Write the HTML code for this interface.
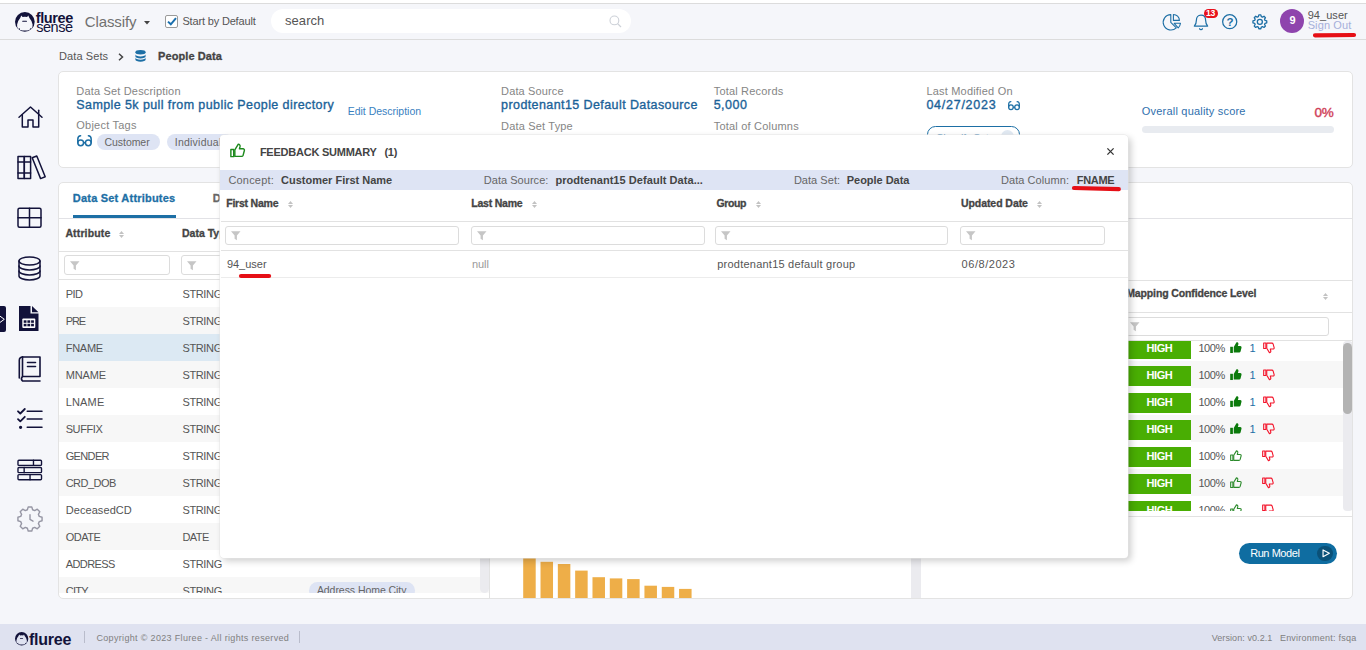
<!DOCTYPE html>
<html lang="en"><head><meta charset="utf-8"><title>Fluree Sense - Classify</title>
<style>
*{box-sizing:border-box;margin:0;padding:0}
html,body{width:1366px;height:650px;overflow:hidden}
body{background:#f5f6fa;font-family:"Liberation Sans",sans-serif;font-size:11px;color:#555;position:relative}
.t{position:absolute;white-space:nowrap;line-height:normal}
.abs{position:absolute}
.grp{position:absolute;left:0;top:0;width:0;height:0}
svg{position:absolute;overflow:visible}
.line{position:absolute;background:#e2e2e6}
.card{position:absolute;background:#fff;border:1px solid #e3e3e3;border-radius:5px}
.pill{position:absolute;background:#dee4f4;border-radius:9px}
.inp{position:absolute;background:#fff;border:1px solid #dcdcdc;border-radius:3px}
.row{position:absolute;left:0;right:0;height:27px}
.alt{background:#f7f7f7}
.sel{background:#dce9f3}
.high{position:absolute;background:#49ae03}
.red{position:absolute;background:#e0161e;border-radius:2px;height:3px}
</style></head>
<body>
<header class="grp">
<div class="abs" style="left:0;top:0;width:1366px;height:3px;background:#fff"></div>
<div class="line" style="left:0;top:3px;width:1366px;height:1px;background:#dcdcdc"></div>
<div class="abs" style="left:0;top:4px;width:1366px;height:36px;border-bottom:1px solid #dcdcdc;background:#f5f6fa"></div>
<svg style="left:14.9px;top:12.4px" width="19.700" height="19.700" viewBox="0 0 19.700 19.700"><circle cx="9.850" cy="9.850" r="9.850" fill="#12123a"/><path d="M6.300 3.600L7.600 5.100Q10 4.500 12.100 5.100L13.300 3.600L14.400 5.900Q16.900 8.600 17.600 12.400Q18 15.200 16.200 17L15.200 15.900L14.600 17.900Q10 19.100 5.100 17.900L4.600 15.900L3.500 17Q1.600 15.200 2.100 12.400Q2.800 8.600 5.200 5.900z" fill="#f5f6fa"/><rect x="7.200" y="8.700" width="4.800" height="1.050" rx=".5" fill="#12123a"/></svg>
<span class="t" style="left:35.70px;top:10.00px;font-size:14.5px;color:#12123a;font-weight:700;letter-spacing:-0.381px;">fluree</span>
<span class="t" style="left:36.20px;top:19.00px;font-size:14.5px;color:#12123a;letter-spacing:-0.439px;">sense</span>
<span class="t" style="left:84.70px;top:13.00px;font-size:15px;color:#707070;letter-spacing:-0.101px;">Classify</span>
<svg style="left:144px;top:20.5px" width="6" height="4" viewBox="0 0 6 4"><path d="M0 0h6L3 3.6z" fill="#444"/></svg>
<div class="abs" style="left:165px;top:15px;width:13px;height:13px;border:1px solid #9a9a9a;border-radius:2px;background:#fff"></div>
<svg style="left:166.5px;top:17px" width="10" height="9" viewBox="0 0 10 9"><path d="M1 4.6L3.8 7.3L9 1.2" fill="none" stroke="#1a6fae" stroke-width="2"/></svg>
<span class="t" style="left:182.40px;top:15.00px;font-size:11px;color:#555;letter-spacing:-0.163px;">Start by Default</span>
<div class="abs" style="left:271px;top:9px;width:360px;height:24px;border-radius:12px;background:#fff"></div>
<span class="t" style="left:285.00px;top:13.00px;font-size:13px;color:#555;letter-spacing:0.063px;">search</span>
<svg style="left:608.600px;top:14.600px" width="13" height="13" viewBox="0 0 13 13"><circle cx="5.400" cy="5.400" r="4.400" fill="none" stroke="#cdd1d8" stroke-width="1.100"/><path d="M8.600 8.600L12 12" stroke="#cdd1d8" stroke-width="1.200"/></svg>
<svg style="left:1163px;top:14px" width="18" height="17" viewBox="0 0 18 17"><g fill="none" stroke="#1d6fa5" stroke-width="1.100" stroke-linejoin="round"><path d="M7.800 8.300V.6A7.700 7.700 0 1 0 13.300 13.800z"/><path d="M10.400 6.400V.5A6 6 0 0 1 16.400 6.400z"/><path d="M11.200 9.300h6.300a7.600 7.600 0 0 1-2.300 4.500z"/></g></svg>
<svg style="left:1193.300px;top:13.900px" width="16" height="17" viewBox="0 0 17 18"><g fill="none" stroke="#1d6fa5" stroke-width="1.3" stroke-linecap="round" stroke-linejoin="round"><path d="M8.5 1.2C5.3 1.2 3.6 3.6 3.6 6.6c0 3.4-1 4.9-2.2 6.2h14.2c-1.2-1.3-2.2-2.800-2.200-6.200C13.400 3.600 11.700 1.200 8.500 1.200z"/><path d="M7 15.6a1.6 1.6 0 0 0 3 0"/></g></svg>
<div class="abs" style="left:1204.200px;top:9px;width:13.600px;height:8.800px;border-radius:4.400px;background:#e8111b"></div>
<span class="t" style="left:1206.00px;top:8.00px;font-size:8.6px;color:#fff;font-weight:700;letter-spacing:-0.280px;">13</span>
<svg style="left:1222.200px;top:14.200px" width="15.400" height="15.400" viewBox="0 0 15.400 15.400"><circle cx="7.700" cy="7.700" r="7.050" fill="none" stroke="#1d6fa5" stroke-width="1.250"/></svg>
<span class="t" style="left:1226.40px;top:16.00px;font-size:11.5px;color:#1d6fa5;font-weight:700;">?</span>
<svg style="left:1251.800px;top:14.100px" width="15.700" height="15.700" viewBox="0 0 18 18"><g fill="none" stroke="#1d6fa5" stroke-width="1.500" stroke-linejoin="round"><circle cx="9" cy="9" r="2.900"/><path d="M7.32 3.03 L7.83 1.09 L10.17 1.09 L10.68 3.03 L12.03 3.59 L13.77 2.57 L15.43 4.23 L14.41 5.97 L14.97 7.32 L16.91 7.83 L16.91 10.17 L14.97 10.68 L14.41 12.03 L15.43 13.77 L13.77 15.43 L12.03 14.41 L10.68 14.97 L10.17 16.91 L7.83 16.91 L7.32 14.97 L5.97 14.41 L4.23 15.43 L2.57 13.77 L3.59 12.03 L3.03 10.68 L1.09 10.17 L1.09 7.83 L3.03 7.32 L3.59 5.97 L2.57 4.23 L4.23 2.57 L5.97 3.59z"/></g></svg>
<div class="abs" style="left:1279.900px;top:8.800px;width:24px;height:24px;border-radius:12px;background:#8e44ad"></div>
<span class="t" style="left:1289.60px;top:14.00px;font-size:11px;color:#fff;font-weight:700;">9</span>
<span class="t" style="left:1307.70px;top:9.00px;font-size:11px;color:#555;letter-spacing:0.050px;">94_user</span>
<span class="t" style="left:1307.70px;top:19.00px;font-size:11px;color:#a6b0da;letter-spacing:0.100px;">Sign Out</span>
<svg style="left:1310.6px;top:30.7px" width="47" height="8" viewBox="1310.6 30.7 47 8"><path d="M1314.6 35L1353.6 34.7" stroke="#e60f16" stroke-width="4.2" stroke-linecap="round" fill="none"/></svg>
</header>
<nav class="grp" aria-label="Main">
<svg style="left:18px;top:105.5px" width="25" height="22" viewBox="0 0 25 22"><g fill="none" stroke="#12123a" stroke-width="1.5" stroke-linejoin="round" stroke-linecap="round"><path d="M1 11.200L12.500 1L24 11.200"/><path d="M4.300 8.800V21h5.700v-7h5v7h5.700V8.800"/><path d="M20.700 8V4.300"/></g></svg>
<svg style="left:16.5px;top:155px" width="29" height="25" viewBox="0 0 29 25"><g fill="none" stroke="#12123a" stroke-width="1.5" stroke-linejoin="round" stroke-linecap="round"><rect x="1" y="1.500" width="6.300" height="22"/><rect x="7.300" y="1.500" width="6.300" height="22"/><path d="M1 7h12.600M1 18h12.600"/><path d="M15.200 2.800l4.600-1.800 8.400 20.800-4.600 1.800z"/></g></svg>
<svg style="left:17.2px;top:207.2px" width="25" height="21.5" viewBox="0 0 25 21"><g fill="none" stroke="#12123a" stroke-width="1.5" stroke-linejoin="round" stroke-linecap="round"><rect x="1" y="1" width="23" height="19" rx="1.500"/><path d="M12.500 1v19M1 10.500h23"/></g></svg>
<svg style="left:18px;top:255.5px" width="23" height="25" viewBox="0 0 23 25"><g fill="none" stroke="#12123a" stroke-width="1.5" stroke-linejoin="round" stroke-linecap="round"><ellipse cx="11.500" cy="5" rx="10.500" ry="4"/><path d="M1 5v15c0 2.200 4.700 4 10.500 4s10.500-1.800 10.500-4V5"/><path d="M1 10c0 2.200 4.700 4 10.500 4s10.500-1.800 10.500-4"/><path d="M1 15c0 2.200 4.700 4 10.500 4s10.500-1.800 10.500-4"/></g></svg>
<div class="abs" style="left:0;top:305.500px;width:5.500px;height:26px;background:#12123a;border-radius:0 2px 2px 0"></div>
<svg style="left:0;top:315px" width="5.500" height="9" viewBox="0 0 5.500 9" overflow="hidden"><path d="M-.5 .8L4.300 4.300L-.5 7.800" fill="none" stroke="#fff" stroke-width="1"/></svg>
<svg style="left:19px;top:306px" width="20" height="25" viewBox="0 0 20 25"><path d="M0 0h11.500v7.500H19.500V25H0z" fill="#12123a"/><path d="M13 0L19.500 6.200H13z" fill="#12123a"/><rect x="3.300" y="12.400" width="13" height="9.600" rx="1" fill="#fff"/><g fill="#12123a"><rect x="4.700" y="14.300" width="2.800" height="2.500"/><rect x="8.400" y="14.300" width="2.800" height="2.500"/><rect x="12.100" y="14.300" width="2.800" height="2.500"/><rect x="4.700" y="17.800" width="2.800" height="2.500"/><rect x="8.400" y="17.800" width="2.800" height="2.500"/><rect x="12.100" y="17.800" width="2.800" height="2.500"/></g></svg>
<svg style="left:18.2px;top:355.8px" width="23" height="26" viewBox="0 0 23 26"><g fill="none" stroke="#12123a" stroke-width="1.6" stroke-linejoin="round" stroke-linecap="round"><path d="M4.500 1H22v19.500H4.500A3.200 3.200 0 0 0 4.500 25H22"/><path d="M1.300 22V4.200A3.200 3.200 0 0 1 4.500 1"/><path d="M4.500 1v19.500"/><path d="M9.500 6.500h8M9.500 10.500h8"/></g></svg>
<svg style="left:16px;top:408.3px" width="27" height="21" viewBox="0 0 27 21"><g fill="none" stroke="#12123a" stroke-width="1.5" stroke-linejoin="round" stroke-linecap="round"><path d="M2 3.300l2.300 2.200L8.800 1" stroke-width="1.800"/><path d="M2 11.100l2.300 2.200L8.800 8.800" stroke-width="1.800"/><path d="M11.200 3.300h14.800M11.200 11.100h14.800M11.200 19.300h14.800"/><circle cx="4.600" cy="19.300" r=".9" fill="#12123a"/></g></svg>
<svg style="left:17.2px;top:458.8px" width="25.5" height="22" viewBox="0 0 26 22"><g fill="none" stroke="#12123a" stroke-width="1.4" stroke-linejoin="round" stroke-linecap="round"><rect x="1" y="1" width="24" height="5.300" rx="1"/><rect x="1" y="8.400" width="24" height="5.300" rx="1"/><rect x="1" y="15.700" width="24" height="5.300" rx="1"/><path d="M16.800 1v5.300M7.300 8.400v5.300M13.300 15.700V21"/></g></svg>
<svg style="left:17px;top:506px" width="26" height="26" viewBox="0 0 26 26"><g fill="none" stroke="#9696a4" stroke-width="1.400" stroke-linejoin="round" stroke-linecap="round"><path d="M10.39 3.76 L11.21 0.93 L14.79 0.93 L15.61 3.76 L17.69 4.62 L20.27 3.20 L22.80 5.73 L21.38 8.31 L22.24 10.39 L25.07 11.21 L25.07 14.79 L22.24 15.61 L21.38 17.69 L22.80 20.27 L20.27 22.80 L17.69 21.38 L15.61 22.24 L14.79 25.07 L11.21 25.07 L10.39 22.24 L8.31 21.38 L5.73 22.80 L3.20 20.27 L4.62 17.69 L3.76 15.61 L0.93 14.79 L0.93 11.21 L3.76 10.39 L4.62 8.31 L3.20 5.73 L5.73 3.20 L8.31 4.62z"/><path d="M13 8.800v4.600l3 1.800"/></g></svg>
</nav>
<main class="grp">
<div class="grp" aria-label="Breadcrumb">
<span class="t" style="left:59.10px;top:50.00px;font-size:11px;color:#555;letter-spacing:0.078px;">Data Sets</span>
<svg style="left:118px;top:53px" width="6" height="8" viewBox="0 0 6 8"><path d="M1 .8L4.500 4L1 7.200" fill="none" stroke="#444" stroke-width="1.500"/></svg>
<svg style="left:135px;top:49.700px" width="11" height="11.700" viewBox="0 0 12 12" preserveAspectRatio="none"><g fill="#1d6fa5"><ellipse cx="6" cy="2.300" rx="5.600" ry="2.300"/><path d="M.4 4.300c0 1.300 2.500 2.300 5.600 2.300s5.600-1 5.600-2.300v2.200c0 1.300-2.500 2.300-5.600 2.300S.4 7.800.4 6.500z"/><path d="M.4 7.800c0 1.300 2.500 2.300 5.600 2.300s5.600-1 5.600-2.300v1.900c0 1.300-2.500 2.300-5.600 2.300S.4 11 .4 9.700z"/></g></svg>
<span class="t" style="left:158.10px;top:50.00px;font-size:11px;color:#444;font-weight:700;letter-spacing:0.085px;-webkit-text-stroke:.3px #444;">People Data</span>
</div>
<section class="grp" aria-label="Data set summary">
<div class="card" style="left:58px;top:71px;width:1295px;height:97px"></div>
<span class="t" style="left:76.30px;top:85.00px;font-size:11px;color:#858585;letter-spacing:0.176px;">Data Set Description</span>
<span class="t" style="left:76.30px;top:98.00px;font-size:12.5px;color:#1b6298;letter-spacing:0.407px;-webkit-text-stroke:.35px #1b6298;">Sample 5k pull from public People directory</span>
<span class="t" style="left:347.70px;top:105.00px;font-size:10.5px;color:#3a7fbf;letter-spacing:-0.008px;">Edit Description</span>
<span class="t" style="left:76.30px;top:119.00px;font-size:11px;color:#858585;letter-spacing:0.229px;">Object Tags</span>
<svg style="left:76.9px;top:135.2px" width="15" height="11.5" viewBox="0 0 15 11.500"><g fill="none" stroke="#1d6fa5" stroke-width="1.500" stroke-linecap="round"><circle cx="3.700" cy="7.800" r="2.900"/><circle cx="11.300" cy="7.800" r="2.900"/><path d="M6.600 7.800h1.800"/><path d="M.8 7.800V4.200C.8 2 2 .9 3.600 .8"/><path d="M14.200 7.800V4.200C14.200 2 13 .9 11.400 .8"/></g></svg>
<div class="pill" style="left:97px;top:134px;width:62.600px;height:16px"></div>
<span class="t" style="left:104.50px;top:136.00px;font-size:10.5px;color:#666;letter-spacing:-0.051px;">Customer</span>
<div class="pill" style="left:167px;top:134px;width:66px;height:16px"></div>
<span class="t" style="left:174.80px;top:136.00px;font-size:10.5px;color:#666;letter-spacing:0.224px;">Individual</span>
<span class="t" style="left:501.10px;top:85.00px;font-size:11px;color:#858585;letter-spacing:0.132px;">Data Source</span>
<span class="t" style="left:501.10px;top:98.00px;font-size:12.5px;color:#1b6298;letter-spacing:0.408px;-webkit-text-stroke:.35px #1b6298;">prodtenant15 Default Datasource</span>
<span class="t" style="left:501.10px;top:120.00px;font-size:11px;color:#858585;letter-spacing:0.176px;">Data Set Type</span>
<span class="t" style="left:713.70px;top:85.00px;font-size:11px;color:#858585;letter-spacing:0.188px;">Total Records</span>
<span class="t" style="left:713.70px;top:98.00px;font-size:12.5px;color:#1b6298;letter-spacing:0.484px;-webkit-text-stroke:.35px #1b6298;">5,000</span>
<span class="t" style="left:713.70px;top:120.00px;font-size:11px;color:#858585;letter-spacing:0.205px;">Total of Columns</span>
<span class="t" style="left:926.40px;top:85.00px;font-size:11px;color:#858585;letter-spacing:0.197px;">Last Modified On</span>
<span class="t" style="left:926.40px;top:98.00px;font-size:12.5px;color:#1b6298;letter-spacing:0.744px;-webkit-text-stroke:.35px #1b6298;">04/27/2023</span>
<svg style="left:1008px;top:100.5px" width="12" height="9.2" viewBox="0 0 15 11.500"><g fill="none" stroke="#1d6fa5" stroke-width="1.500" stroke-linecap="round"><circle cx="3.700" cy="7.800" r="2.900"/><circle cx="11.300" cy="7.800" r="2.900"/><path d="M6.600 7.800h1.800"/><path d="M.8 7.800V4.200C.8 2 2 .9 3.600 .8"/><path d="M14.200 7.800V4.200C14.200 2 13 .9 11.400 .8"/></g></svg>
<div class="abs" style="left:927px;top:125.700px;width:93px;height:21px;border:1.200px solid #1d6fa5;border-radius:8.500px;background:#fff"></div>
<span class="t" style="left:935.70px;top:132.00px;font-size:11px;color:#1d6fa5;letter-spacing:-0.448px;">Classify Set</span>
<div class="abs" style="left:1000.500px;top:130px;width:13.700px;height:13.700px;border-radius:7px;background:#e1e9f2"></div>
<span class="t" style="left:1003.90px;top:134.00px;font-size:10px;color:#1d6fa5;font-weight:700;">»</span>
<span class="t" style="left:1141.80px;top:105.00px;font-size:11px;color:#2f6fad;letter-spacing:0.202px;">Overall quality score</span>
<span class="t" style="left:1314.40px;top:105.00px;font-size:13.5px;color:#cf3d57;letter-spacing:-0.156px;-webkit-text-stroke:.4px #cf3d57;">0%</span>
<div class="abs" style="left:1142px;top:126px;width:192px;height:6.500px;border-radius:3.500px;background:#e8ebf0"></div>
</section>
<section class="grp" aria-label="Data set attributes">
<div class="card" style="left:58px;top:182px;width:1295px;height:417px"></div>
<span class="t" style="left:72.80px;top:192.00px;font-size:11px;color:#1d6fa5;font-weight:700;letter-spacing:0.210px;-webkit-text-stroke:.3px #1d6fa5;">Data Set Attributes</span>
<div class="abs" style="left:73px;top:215px;width:103px;height:3px;background:#1d6fa5"></div>
<span class="t" style="left:212.70px;top:192.00px;font-size:11px;color:#666;font-weight:700;-webkit-text-stroke:.3px #666;">Data Relationships</span>
<div class="line" style="left:59px;top:218px;width:1293px;height:1px"></div>
<div class="abs" style="left:59px;top:219px;width:430px;height:374px;overflow:hidden"><div class="abs" style="left:1px;top:0;width:429.500px;height:374px">
<div class="line" style="left:-1px;top:32px;width:431px;height:1px;background:#e2e2e2"></div>
<div class="line" style="left:-1px;top:60px;width:431px;height:1px;background:#e2e2e2"></div>
<div class="inp" style="left:4.300px;top:36px;width:105.500px;height:19.500px"></div><svg style="left:10.3px;top:41.9px" width="9.500" height="9.500" viewBox="0 0 9 9"><path d="M0 0.200h9L5.600 4.300v4.400L3.400 7.300V4.300z" fill="#c6c6c6"/></svg>
<div class="inp" style="left:121.300px;top:36px;width:105.500px;height:19.500px"></div><svg style="left:127.3px;top:41.9px" width="9.500" height="9.500" viewBox="0 0 9 9"><path d="M0 0.200h9L5.600 4.300v4.400L3.400 7.300V4.300z" fill="#c6c6c6"/></svg>
<div class="inp" style="left:245px;top:36px;width:170px;height:19.500px"></div><svg style="left:250.8px;top:41.9px" width="9.500" height="9.500" viewBox="0 0 9 9"><path d="M0 0.200h9L5.600 4.300v4.400L3.400 7.300V4.300z" fill="#c6c6c6"/></svg>
<div class="row" style="left:-1px;top:61.4px"></div>
<span class="t" style="left:5.70px;top:69.00px;font-size:11px;color:#555;letter-spacing:-0.546px;">PID</span>
<span class="t" style="left:122.40px;top:69.00px;font-size:11px;color:#555;letter-spacing:-0.343px;">STRING</span>
<div class="row alt" style="left:-1px;top:88.4px"></div>
<span class="t" style="left:5.70px;top:96.00px;font-size:11px;color:#555;letter-spacing:-1.139px;">PRE</span>
<span class="t" style="left:122.40px;top:96.00px;font-size:11px;color:#555;letter-spacing:-0.343px;">STRING</span>
<div class="row sel" style="left:-1px;top:115.4px"></div>
<span class="t" style="left:5.70px;top:123.00px;font-size:11px;color:#555;letter-spacing:-0.260px;">FNAME</span>
<span class="t" style="left:122.40px;top:123.00px;font-size:11px;color:#555;letter-spacing:-0.343px;">STRING</span>
<div class="row alt" style="left:-1px;top:142.4px"></div>
<span class="t" style="left:5.70px;top:150.00px;font-size:11px;color:#555;letter-spacing:-0.149px;">MNAME</span>
<span class="t" style="left:122.40px;top:150.00px;font-size:11px;color:#555;letter-spacing:-0.343px;">STRING</span>
<div class="row" style="left:-1px;top:169.4px"></div>
<span class="t" style="left:5.70px;top:177.00px;font-size:11px;color:#555;letter-spacing:0.160px;">LNAME</span>
<span class="t" style="left:122.40px;top:177.00px;font-size:11px;color:#555;letter-spacing:-0.343px;">STRING</span>
<div class="row alt" style="left:-1px;top:196.4px"></div>
<span class="t" style="left:5.70px;top:204.00px;font-size:11px;color:#555;letter-spacing:-0.402px;">SUFFIX</span>
<span class="t" style="left:122.40px;top:204.00px;font-size:11px;color:#555;letter-spacing:-0.343px;">STRING</span>
<div class="row" style="left:-1px;top:223.4px"></div>
<span class="t" style="left:5.70px;top:231.00px;font-size:11px;color:#555;letter-spacing:-0.644px;">GENDER</span>
<span class="t" style="left:122.40px;top:231.00px;font-size:11px;color:#555;letter-spacing:-0.343px;">STRING</span>
<div class="row alt" style="left:-1px;top:250.4px"></div>
<span class="t" style="left:5.70px;top:258.00px;font-size:11px;color:#555;letter-spacing:-0.512px;">CRD_DOB</span>
<span class="t" style="left:122.40px;top:258.00px;font-size:11px;color:#555;letter-spacing:-0.343px;">STRING</span>
<div class="row" style="left:-1px;top:277.4px"></div>
<span class="t" style="left:5.70px;top:285.00px;font-size:11px;color:#555;letter-spacing:0.078px;">DeceasedCD</span>
<span class="t" style="left:122.40px;top:285.00px;font-size:11px;color:#555;letter-spacing:-0.343px;">STRING</span>
<div class="row alt" style="left:-1px;top:304.4px"></div>
<span class="t" style="left:5.70px;top:312.00px;font-size:11px;color:#555;letter-spacing:-0.475px;">ODATE</span>
<span class="t" style="left:122.40px;top:312.00px;font-size:11px;color:#555;letter-spacing:-0.505px;">DATE</span>
<div class="row" style="left:-1px;top:331.4px"></div>
<span class="t" style="left:5.70px;top:339.00px;font-size:11px;color:#555;letter-spacing:-0.568px;">ADDRESS</span>
<span class="t" style="left:122.40px;top:339.00px;font-size:11px;color:#555;letter-spacing:-0.343px;">STRING</span>
<div class="row alt" style="left:-1px;top:358.4px"></div>
<span class="t" style="left:5.70px;top:366.00px;font-size:11px;color:#555;letter-spacing:-0.714px;">CITY</span>
<span class="t" style="left:122.40px;top:366.00px;font-size:11px;color:#555;letter-spacing:-0.343px;">STRING</span>
<div class="pill" style="left:248.800px;top:363px;width:106.200px;height:17px"></div>
<span class="t" style="left:256.90px;top:365.00px;font-size:10.5px;color:#666;letter-spacing:-0.056px;">Address Home City</span>
<div class="abs" style="left:420px;top:62px;width:9px;height:312px;border-radius:4.500px;background:#ebebef"></div>
</div></div>
<span class="t" style="left:65.40px;top:227.00px;font-size:10.5px;color:#444;font-weight:700;letter-spacing:0.140px;-webkit-text-stroke:.3px #444;">Attribute</span>
<svg style="left:118.5px;top:231.1px" width="5" height="7" viewBox="0 0 5 7"><path d="M2.500 0L5 2.900H0z" fill="#c2c2c2"/><path d="M2.500 7L5 4.100H0z" fill="#c2c2c2"/></svg>
<span class="t" style="left:182.00px;top:227.00px;font-size:10.5px;color:#444;font-weight:700;-webkit-text-stroke:.3px #444;">Data Type</span>
<div class="line" style="left:489px;top:219px;width:1px;height:379px;background:#e2e2e2"></div>
<div class="abs" style="left:911.300px;top:219px;width:9.700px;height:379px;background:#ebebef"></div>
<svg style="left:490px;top:540px" width="421" height="58" viewBox="490 540 421 58"><rect x="523.2" y="548" width="12.500" height="50" fill="#eeae48"/><rect x="540.52" y="561.8" width="12.500" height="36.2" fill="#eeae48"/><rect x="557.84" y="564" width="12.500" height="34" fill="#eeae48"/><rect x="575.16" y="570.6" width="12.500" height="27.4" fill="#eeae48"/><rect x="592.48" y="577.2" width="12.500" height="20.8" fill="#eeae48"/><rect x="609.8" y="578.4" width="12.500" height="19.6" fill="#eeae48"/><rect x="627.12" y="579.1" width="12.500" height="18.9" fill="#eeae48"/><rect x="644.44" y="585.7" width="12.500" height="12.3" fill="#eeae48"/><rect x="661.76" y="586.9" width="12.500" height="11.1" fill="#eeae48"/><rect x="679.08" y="588.9" width="12.500" height="9.1" fill="#eeae48"/></svg>
</section>
<section class="grp" aria-label="Mapping confidence">
<div class="line" style="left:921px;top:280px;width:430.500px;height:1px;background:#e2e2e2"></div>
<span class="t" style="left:1126.20px;top:287.00px;font-size:10.5px;color:#444;font-weight:700;letter-spacing:-0.126px;-webkit-text-stroke:.3px #444;">Mapping Confidence Level</span>
<svg style="left:1323.4px;top:292.6px" width="5" height="7" viewBox="0 0 5 7"><path d="M2.500 0L5 2.900H0z" fill="#c2c2c2"/><path d="M2.500 7L5 4.100H0z" fill="#c2c2c2"/></svg>
<div class="line" style="left:921px;top:312px;width:430.500px;height:1px;background:#e2e2e2"></div>
<div class="inp" style="left:1100px;top:317px;width:228.500px;height:19px"></div><svg style="left:1130.1px;top:321.7px" width="9.500" height="9.500" viewBox="0 0 9 9"><path d="M0 0.200h9L5.600 4.300v4.400L3.400 7.300V4.300z" fill="#c6c6c6"/></svg>
<div class="line" style="left:921px;top:340px;width:430.500px;height:1px;background:#e2e2e2"></div>
<div class="abs" style="left:921px;top:341px;width:430.500px;height:169.500px;overflow:hidden">
<div class="row" style="top:-6.6px"></div>
<div class="high" style="left:120px;top:-2.2px;width:150.200px;height:20px;box-shadow:0 2.500px 0 #fff"></div>
<span class="t" style="left:225.40px;top:1.00px;font-size:11px;color:#fff;font-weight:700;letter-spacing:-0.375px;">HIGH</span>
<span class="t" style="left:277.40px;top:1.00px;font-size:11px;color:#555;letter-spacing:-0.408px;">100%</span>
<svg style="left:309px;top:1.2px" width="12" height="11.5" viewBox="0 0 12.500 12"><g fill="#0b7a0b"><rect x="0.2" y="5" width="2.800" height="6.500"/><path d="M3.900 11V5.300L6.600 .6c.2-.4.700-.5 1.100-.3.900.4 1.300 1.300 1 2.200L8.200 4.300h2.500c.900 0 1.500.8 1.300 1.600l-1 4c-.2.700-.8 1.100-1.500 1.100z"/></g></svg>
<span class="t" style="left:328.40px;top:1.00px;font-size:11px;color:#1d6fa5;">1</span>
<svg style="left:342.3px;top:1px" width="12" height="11.5" viewBox="0 0 12.500 12"><g transform="translate(0 12) scale(1 -1)" fill="none" stroke="#f3152b" stroke-width="1.150" stroke-linejoin="round"><rect x="0.700" y="5.200" width="2.300" height="5.800"/><path d="M3.900 10.800V5.500L6.700 .9c.9.100 1.600.9 1.400 1.900L7.600 4.700h2.900c.800 0 1.300.7 1.100 1.400l-1 3.700c-.2.600-.7 1-1.300 1z"/></g></svg>
<div class="row alt" style="top:20.4px"></div>
<div class="high" style="left:120px;top:24.8px;width:150.200px;height:20px;box-shadow:0 2.500px 0 #fff"></div>
<span class="t" style="left:225.40px;top:28.00px;font-size:11px;color:#fff;font-weight:700;letter-spacing:-0.375px;">HIGH</span>
<span class="t" style="left:277.40px;top:28.00px;font-size:11px;color:#555;letter-spacing:-0.408px;">100%</span>
<svg style="left:309px;top:28.2px" width="12" height="11.5" viewBox="0 0 12.500 12"><g fill="#0b7a0b"><rect x="0.2" y="5" width="2.800" height="6.500"/><path d="M3.900 11V5.300L6.600 .6c.2-.4.700-.5 1.100-.3.900.4 1.300 1.300 1 2.200L8.200 4.300h2.500c.900 0 1.500.8 1.300 1.600l-1 4c-.2.700-.8 1.100-1.500 1.100z"/></g></svg>
<span class="t" style="left:328.40px;top:28.00px;font-size:11px;color:#1d6fa5;">1</span>
<svg style="left:342.3px;top:28px" width="12" height="11.5" viewBox="0 0 12.500 12"><g transform="translate(0 12) scale(1 -1)" fill="none" stroke="#f3152b" stroke-width="1.150" stroke-linejoin="round"><rect x="0.700" y="5.200" width="2.300" height="5.800"/><path d="M3.900 10.800V5.500L6.700 .9c.9.100 1.600.9 1.400 1.900L7.600 4.700h2.900c.800 0 1.300.7 1.100 1.400l-1 3.700c-.2.600-.7 1-1.300 1z"/></g></svg>
<div class="row" style="top:47.4px"></div>
<div class="high" style="left:120px;top:51.8px;width:150.200px;height:20px;box-shadow:0 2.500px 0 #fff"></div>
<span class="t" style="left:225.40px;top:55.00px;font-size:11px;color:#fff;font-weight:700;letter-spacing:-0.375px;">HIGH</span>
<span class="t" style="left:277.40px;top:55.00px;font-size:11px;color:#555;letter-spacing:-0.408px;">100%</span>
<svg style="left:309px;top:55.2px" width="12" height="11.5" viewBox="0 0 12.500 12"><g fill="#0b7a0b"><rect x="0.2" y="5" width="2.800" height="6.500"/><path d="M3.900 11V5.300L6.600 .6c.2-.4.700-.5 1.100-.3.900.4 1.300 1.300 1 2.200L8.200 4.300h2.500c.900 0 1.500.8 1.300 1.600l-1 4c-.2.700-.8 1.100-1.500 1.100z"/></g></svg>
<span class="t" style="left:328.40px;top:55.00px;font-size:11px;color:#1d6fa5;">1</span>
<svg style="left:342.3px;top:55px" width="12" height="11.5" viewBox="0 0 12.500 12"><g transform="translate(0 12) scale(1 -1)" fill="none" stroke="#f3152b" stroke-width="1.150" stroke-linejoin="round"><rect x="0.700" y="5.200" width="2.300" height="5.800"/><path d="M3.900 10.800V5.500L6.700 .9c.9.100 1.600.9 1.400 1.900L7.600 4.700h2.900c.800 0 1.300.7 1.100 1.400l-1 3.700c-.2.600-.7 1-1.300 1z"/></g></svg>
<div class="row alt" style="top:74.4px"></div>
<div class="high" style="left:120px;top:78.8px;width:150.200px;height:20px;box-shadow:0 2.500px 0 #fff"></div>
<span class="t" style="left:225.40px;top:82.00px;font-size:11px;color:#fff;font-weight:700;letter-spacing:-0.375px;">HIGH</span>
<span class="t" style="left:277.40px;top:82.00px;font-size:11px;color:#555;letter-spacing:-0.408px;">100%</span>
<svg style="left:309px;top:82.2px" width="12" height="11.5" viewBox="0 0 12.500 12"><g fill="#0b7a0b"><rect x="0.2" y="5" width="2.800" height="6.500"/><path d="M3.900 11V5.300L6.600 .6c.2-.4.700-.5 1.100-.3.900.4 1.300 1.300 1 2.200L8.200 4.300h2.500c.900 0 1.500.8 1.300 1.600l-1 4c-.2.700-.8 1.100-1.500 1.100z"/></g></svg>
<span class="t" style="left:328.40px;top:82.00px;font-size:11px;color:#1d6fa5;">1</span>
<svg style="left:342.3px;top:82px" width="12" height="11.5" viewBox="0 0 12.500 12"><g transform="translate(0 12) scale(1 -1)" fill="none" stroke="#f3152b" stroke-width="1.150" stroke-linejoin="round"><rect x="0.700" y="5.200" width="2.300" height="5.800"/><path d="M3.900 10.800V5.500L6.700 .9c.9.100 1.600.9 1.400 1.900L7.600 4.700h2.900c.800 0 1.300.7 1.100 1.400l-1 3.700c-.2.600-.7 1-1.300 1z"/></g></svg>
<div class="row" style="top:101.4px"></div>
<div class="high" style="left:120px;top:105.8px;width:150.200px;height:20px;box-shadow:0 2.500px 0 #fff"></div>
<span class="t" style="left:225.40px;top:109.00px;font-size:11px;color:#fff;font-weight:700;letter-spacing:-0.375px;">HIGH</span>
<span class="t" style="left:277.40px;top:109.00px;font-size:11px;color:#555;letter-spacing:-0.408px;">100%</span>
<svg style="left:309px;top:109.2px" width="12" height="11.5" viewBox="0 0 12.500 12"><g fill="none" stroke="#2b8a2b" stroke-width="1.150" stroke-linejoin="round"><rect x="0.700" y="5.200" width="2.300" height="5.800"/><path d="M3.900 10.800V5.500L6.700 .9c.9.100 1.600.9 1.400 1.900L7.600 4.700h2.900c.800 0 1.300.7 1.100 1.400l-1 3.700c-.2.600-.7 1-1.300 1z"/></g></svg>
<svg style="left:340.5px;top:109px" width="12" height="11.5" viewBox="0 0 12.500 12"><g transform="translate(0 12) scale(1 -1)" fill="none" stroke="#f3152b" stroke-width="1.150" stroke-linejoin="round"><rect x="0.700" y="5.200" width="2.300" height="5.800"/><path d="M3.900 10.800V5.500L6.700 .9c.9.100 1.600.9 1.400 1.900L7.600 4.700h2.900c.800 0 1.300.7 1.100 1.400l-1 3.700c-.2.600-.7 1-1.300 1z"/></g></svg>
<div class="row alt" style="top:128.4px"></div>
<div class="high" style="left:120px;top:132.8px;width:150.200px;height:20px;box-shadow:0 2.500px 0 #fff"></div>
<span class="t" style="left:225.40px;top:136.00px;font-size:11px;color:#fff;font-weight:700;letter-spacing:-0.375px;">HIGH</span>
<span class="t" style="left:277.40px;top:136.00px;font-size:11px;color:#555;letter-spacing:-0.408px;">100%</span>
<svg style="left:309px;top:136.2px" width="12" height="11.5" viewBox="0 0 12.500 12"><g fill="none" stroke="#2b8a2b" stroke-width="1.150" stroke-linejoin="round"><rect x="0.700" y="5.200" width="2.300" height="5.800"/><path d="M3.900 10.800V5.500L6.700 .9c.9.100 1.600.9 1.400 1.900L7.600 4.700h2.900c.800 0 1.300.7 1.100 1.400l-1 3.700c-.2.600-.7 1-1.300 1z"/></g></svg>
<svg style="left:340.5px;top:136px" width="12" height="11.5" viewBox="0 0 12.500 12"><g transform="translate(0 12) scale(1 -1)" fill="none" stroke="#f3152b" stroke-width="1.150" stroke-linejoin="round"><rect x="0.700" y="5.200" width="2.300" height="5.800"/><path d="M3.900 10.800V5.500L6.700 .9c.9.100 1.600.9 1.400 1.900L7.600 4.700h2.900c.800 0 1.300.7 1.100 1.400l-1 3.700c-.2.600-.7 1-1.300 1z"/></g></svg>
<div class="row" style="top:155.4px"></div>
<div class="high" style="left:120px;top:159.8px;width:150.200px;height:20px;box-shadow:0 2.500px 0 #fff"></div>
<span class="t" style="left:225.40px;top:163.00px;font-size:11px;color:#fff;font-weight:700;letter-spacing:-0.375px;">HIGH</span>
<span class="t" style="left:277.40px;top:163.00px;font-size:11px;color:#555;letter-spacing:-0.408px;">100%</span>
<svg style="left:309px;top:163.2px" width="12" height="11.5" viewBox="0 0 12.500 12"><g fill="none" stroke="#2b8a2b" stroke-width="1.150" stroke-linejoin="round"><rect x="0.700" y="5.200" width="2.300" height="5.800"/><path d="M3.900 10.800V5.500L6.700 .9c.9.100 1.600.9 1.400 1.900L7.600 4.700h2.900c.800 0 1.300.7 1.100 1.400l-1 3.700c-.2.600-.7 1-1.300 1z"/></g></svg>
<svg style="left:340.5px;top:163px" width="12" height="11.5" viewBox="0 0 12.500 12"><g transform="translate(0 12) scale(1 -1)" fill="none" stroke="#f3152b" stroke-width="1.150" stroke-linejoin="round"><rect x="0.700" y="5.200" width="2.300" height="5.800"/><path d="M3.900 10.800V5.500L6.700 .9c.9.100 1.600.9 1.400 1.900L7.600 4.700h2.900c.800 0 1.300.7 1.100 1.400l-1 3.700c-.2.600-.7 1-1.300 1z"/></g></svg>
<div class="abs" style="left:422px;top:0;width:9.500px;height:170px;background:#ebebef;border-radius:4px"></div>
<div class="abs" style="left:422.300px;top:2px;width:8.500px;height:71px;background:#b3b3b3;border-radius:4.500px"></div>
</div>
<div class="line" style="left:921px;top:516px;width:430.500px;height:1px;background:#e2e2e2"></div>
<div class="abs" style="left:1239.300px;top:543.200px;width:97.700px;height:21px;border-radius:10.500px;background:#0f6da1"></div>
<span class="t" style="left:1250.20px;top:547.00px;font-size:11px;color:#fff;letter-spacing:-0.444px;">Run Model</span>
<div class="abs" style="left:1317.300px;top:546px;width:15.400px;height:15.400px;border-radius:8px;background:#0b5178"></div>
<svg style="left:1321.500px;top:549.400px" width="8.400" height="8.600" viewBox="0 0 8 8"><path d="M1 .8L7 4L1 7.200z" fill="none" stroke="#fff" stroke-width="1.100" stroke-linejoin="round"/></svg>
</section>
</main>
<footer class="grp">
<div class="abs" style="left:0;top:624px;width:1366px;height:26px;background:#dfe2f0"></div>
<svg style="left:15px;top:631.5px" width="13.300" height="13.500" viewBox="0 0 19.700 19.700"><circle cx="9.850" cy="9.850" r="9.850" fill="#12123a"/><path d="M6.300 3.600L7.600 5.100Q10 4.500 12.100 5.100L13.300 3.600L14.400 5.900Q16.900 8.600 17.600 12.400Q18 15.200 16.200 17L15.200 15.900L14.600 17.900Q10 19.100 5.100 17.900L4.600 15.900L3.500 17Q1.600 15.200 2.100 12.400Q2.800 8.600 5.200 5.900z" fill="#dfe2f0"/><rect x="7.200" y="8.700" width="4.800" height="1.050" rx=".5" fill="#12123a"/></svg>
<span class="t" style="left:28.90px;top:631.00px;font-size:16px;color:#12123a;font-weight:700;letter-spacing:-0.212px;">fluree</span>
<div class="line" style="left:84px;top:631px;width:1px;height:12px;background:#b9bccb"></div>
<span class="t" style="left:96.40px;top:633.00px;font-size:9px;color:#808080;letter-spacing:0.335px;">Copyright © 2023 Fluree - All rights reserved</span>
<div class="line" style="left:299px;top:631px;width:1px;height:12px;background:#b9bccb"></div>
<span class="t" style="left:1211.70px;top:633.00px;font-size:9px;color:#808080;letter-spacing:0.078px;">Version: v0.2.1</span>
<span class="t" style="left:1279.90px;top:633.00px;font-size:9px;color:#808080;letter-spacing:0.233px;">Environment: fsqa</span>
</footer>
<div class="grp" role="dialog" aria-label="Feedback summary">
<div class="abs" style="left:219.500px;top:134.500px;width:908.500px;height:423.400px;background:#fff;border-radius:4px;box-shadow:0 0 0 .5px #e6e6e6,3px 3px 7px rgba(0,0,0,.2)"></div>
<svg style="left:229.8px;top:143.3px" width="15.5" height="14.9" viewBox="0 0 12.500 12"><g fill="none" stroke="#1d8a1d" stroke-width="1.150" stroke-linejoin="round"><rect x="0.700" y="5.200" width="2.300" height="5.800"/><path d="M3.900 10.800V5.500L6.700 .9c.9.100 1.600.9 1.400 1.900L7.600 4.700h2.900c.800 0 1.300.7 1.100 1.400l-1 3.700c-.2.600-.7 1-1.300 1z"/></g></svg>
<span class="t" style="left:259.90px;top:146.00px;font-size:11px;color:#444;font-weight:700;letter-spacing:-0.237px;">FEEDBACK SUMMARY</span>
<span class="t" style="left:384.40px;top:146.00px;font-size:11px;color:#444;font-weight:700;letter-spacing:-0.215px;">(1)</span>
<svg style="left:1106.500px;top:147.800px" width="7" height="7" viewBox="0 0 7 7"><path d="M.4 .4L6.600 6.600M6.600 .4L.4 6.600" stroke="#333" stroke-width="1.300"/></svg>
<div class="abs" style="left:219.500px;top:170px;width:908.500px;height:20px;background:#dee4f4"></div>
<span class="t" style="left:228.40px;top:174.00px;font-size:11px;color:#666;letter-spacing:0.197px;">Concept:</span>
<span class="t" style="left:281.10px;top:174.00px;font-size:11px;color:#444;font-weight:700;letter-spacing:-0.008px;">Customer First Name</span>
<span class="t" style="left:483.80px;top:174.00px;font-size:11px;color:#666;letter-spacing:0.033px;">Data Source:</span>
<span class="t" style="left:555.40px;top:174.00px;font-size:11px;color:#444;font-weight:700;letter-spacing:0.054px;">prodtenant15 Default Data...</span>
<span class="t" style="left:793.90px;top:174.00px;font-size:11px;color:#666;letter-spacing:0.038px;">Data Set:</span>
<span class="t" style="left:846.80px;top:174.00px;font-size:11px;color:#444;font-weight:700;letter-spacing:-0.033px;">People Data</span>
<span class="t" style="left:1001.00px;top:174.00px;font-size:11px;color:#666;letter-spacing:0.062px;">Data Column:</span>
<span class="t" style="left:1076.80px;top:174.00px;font-size:11px;color:#444;font-weight:700;letter-spacing:-0.301px;">FNAME</span>
<svg style="left:1070.2px;top:183.7px" width="52.8" height="8" viewBox="1070.2 183.7 52.8 8"><path d="M1074.2 187.7L1119 188.9" stroke="#e60f16" stroke-width="4.2" stroke-linecap="round" fill="none"/></svg>
<span class="t" style="left:226.20px;top:197.00px;font-size:10.5px;color:#444;font-weight:700;letter-spacing:-0.207px;-webkit-text-stroke:.3px #444;">First Name</span>
<svg style="left:288.3px;top:200.9px" width="5" height="7" viewBox="0 0 5 7"><path d="M2.500 0L5 2.900H0z" fill="#c2c2c2"/><path d="M2.500 7L5 4.100H0z" fill="#c2c2c2"/></svg>
<span class="t" style="left:471.30px;top:197.00px;font-size:10.5px;color:#444;font-weight:700;letter-spacing:-0.223px;-webkit-text-stroke:.3px #444;">Last Name</span>
<svg style="left:532px;top:200.9px" width="5" height="7" viewBox="0 0 5 7"><path d="M2.500 0L5 2.900H0z" fill="#c2c2c2"/><path d="M2.500 7L5 4.100H0z" fill="#c2c2c2"/></svg>
<span class="t" style="left:716.40px;top:197.00px;font-size:10.5px;color:#444;font-weight:700;letter-spacing:-0.359px;-webkit-text-stroke:.3px #444;">Group</span>
<svg style="left:756px;top:200.9px" width="5" height="7" viewBox="0 0 5 7"><path d="M2.500 0L5 2.900H0z" fill="#c2c2c2"/><path d="M2.500 7L5 4.100H0z" fill="#c2c2c2"/></svg>
<span class="t" style="left:960.90px;top:197.00px;font-size:10.5px;color:#444;font-weight:700;letter-spacing:-0.056px;-webkit-text-stroke:.3px #444;">Updated Date</span>
<svg style="left:1037px;top:200.9px" width="5" height="7" viewBox="0 0 5 7"><path d="M2.500 0L5 2.900H0z" fill="#c2c2c2"/><path d="M2.500 7L5 4.100H0z" fill="#c2c2c2"/></svg>
<div class="line" style="left:220.500px;top:221px;width:907px;height:1px;background:#e2e2e2"></div>
<div class="inp" style="left:225.3px;top:226.300px;width:234.1px;height:18.500px"></div>
<svg style="left:231.1px;top:230.5px" width="9.500" height="9.500" viewBox="0 0 9 9"><path d="M0 0.200h9L5.600 4.300v4.400L3.400 7.300V4.300z" fill="#c6c6c6"/></svg>
<div class="inp" style="left:471px;top:226.300px;width:234px;height:18.500px"></div>
<svg style="left:476.8px;top:230.5px" width="9.500" height="9.500" viewBox="0 0 9 9"><path d="M0 0.200h9L5.600 4.300v4.400L3.400 7.300V4.300z" fill="#c6c6c6"/></svg>
<div class="inp" style="left:715.4px;top:226.300px;width:233px;height:18.500px"></div>
<svg style="left:721.2px;top:230.5px" width="9.500" height="9.500" viewBox="0 0 9 9"><path d="M0 0.200h9L5.600 4.300v4.400L3.400 7.300V4.300z" fill="#c6c6c6"/></svg>
<div class="inp" style="left:960px;top:226.300px;width:145.3px;height:18.500px"></div>
<svg style="left:965.8px;top:230.5px" width="9.500" height="9.500" viewBox="0 0 9 9"><path d="M0 0.200h9L5.600 4.300v4.400L3.400 7.300V4.300z" fill="#c6c6c6"/></svg>
<div class="line" style="left:220.500px;top:249.500px;width:907px;height:1px;background:#e2e2e2"></div>
<span class="t" style="left:226.90px;top:258.00px;font-size:11px;color:#555;letter-spacing:-0.007px;">94_user</span>
<span class="t" style="left:472.00px;top:258.00px;font-size:11px;color:#999;letter-spacing:-0.081px;">null</span>
<span class="t" style="left:717.20px;top:258.00px;font-size:11px;color:#555;letter-spacing:0.234px;">prodtenant15 default group</span>
<span class="t" style="left:961.60px;top:258.00px;font-size:11px;color:#555;letter-spacing:0.540px;">06/8/2023</span>
<div class="line" style="left:220.500px;top:276.500px;width:907px;height:1px;background:#ececec"></div>
<svg style="left:236.8px;top:271.6px" width="36.1" height="8" viewBox="236.8 271.6 36.1 8"><path d="M240.8 275.6L268.9 275.6" stroke="#e60f16" stroke-width="4.2" stroke-linecap="round" fill="none"/></svg>
</div>
</body></html>
